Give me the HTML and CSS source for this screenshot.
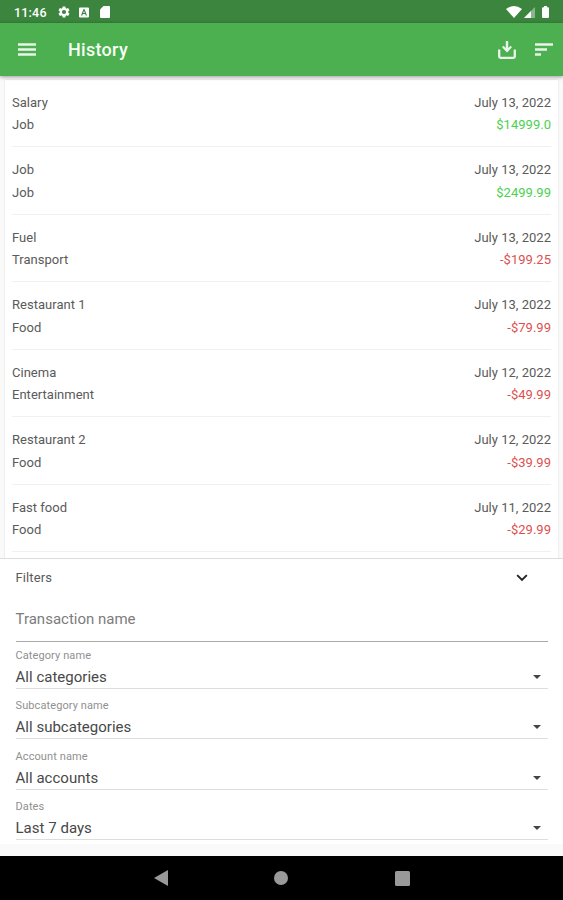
FILE: index.html
```html
<!DOCTYPE html>
<html lang="en">
<head>
<meta charset="utf-8">
<title>History</title>
<link rel="stylesheet" href="styles.css">
</head>
<body>
<div class="screen">
  <div class="status">
    <span class="clock">11:46</span>
    <svg class="gear" width="14" height="14" viewBox="0 0 24 24"><path d="M19.14 12.94c.04-.3.06-.61.06-.94s-.02-.64-.07-.94l2.03-1.58c.18-.14.23-.41.12-.61l-1.92-3.32c-.12-.22-.37-.29-.59-.22l-2.39.96c-.5-.38-1.03-.7-1.62-.94L14.4 2.81c-.04-.24-.24-.41-.48-.41h-3.84c-.24 0-.43.17-.47.41l-.36 2.54c-.59.24-1.13.57-1.62.94l-2.39-.96c-.22-.08-.47 0-.59.22L2.74 8.87c-.12.21-.08.47.12.61l2.03 1.58c-.05.3-.09.63-.09.94s.02.64.07.94l-2.03 1.58c-.18.14-.23.41-.12.61l1.92 3.32c.12.22.37.29.59.22l2.39-.96c.5.38 1.03.7 1.62.94l.36 2.54c.05.24.24.41.48.41h3.84c.24 0 .44-.17.47-.41l.36-2.54c.59-.24 1.13-.56 1.62-.94l2.39.96c.22.08.47 0 .59-.22l1.92-3.32c.12-.22.07-.47-.12-.61zM12 15.6a3.6 3.6 0 1 1 0-7.2 3.6 3.6 0 0 1 0 7.2z"/></svg>
    <svg class="debug" width="10" height="11" viewBox="0 0 10 11"><path fill-rule="evenodd" d="M1 0.500h8a1 1 0 0 1 1 1v8a1 1 0 0 1-1 1H1a1 1 0 0 1-1-1v-8a1 1 0 0 1 1-1zM4.400 2.200 2 8.600h1.300l.6-1.600h2.300l.6 1.600H8L5.600 2.200zM5 3.700l.8 2.300H4.200z"/></svg>
    <svg class="sd" width="10" height="12" viewBox="0 0 10 12"><path d="M3.500 0H9a1 1 0 0 1 1 1v10a1 1 0 0 1-1 1H1a1 1 0 0 1-1-1V3.500z"/></svg>
    <svg class="wifi" width="16" height="12" viewBox="0 0 16 12"><path d="M0 3Q8-3 16 3L8 12z"/></svg>
    <svg class="signal" width="11" height="11" viewBox="0 0 11 11"><path opacity=".4" d="M0 11 11 0v11z"/><path d="M0 11 7 4v7z"/></svg>
    <svg class="battery" width="7" height="12" viewBox="0 0 7 12"><path d="M2 0h3v1.200h1a1 1 0 0 1 1 1V11a1 1 0 0 1-1 1H1a1 1 0 0 1-1-1V2.200a1 1 0 0 1 1-1h1z"/></svg>
  </div>
  <header class="appbar">
    <svg class="menu" width="18" height="13" viewBox="0 0 18 13"><path d="M0 .3h18v2.400H0zM0 5.300h18v2.400H0zM0 10.300h18v2.400H0z"/></svg>
    <h1 class="title">History</h1>
    <svg class="download" width="18" height="18" viewBox="0 0 18 18"><path d="M7.800 0h2.400v7l2.300-2.200L14 6.300l-5 5.200-5-5.200 1.500-1.500L7.800 7z"/><path d="M1.200 8.500v7q0 1.300 1.300 1.300h13q1.300 0 1.300-1.300v-7" fill="none" stroke="#e8f5e9" stroke-width="2.300"/></svg>
    <svg class="sort" width="18" height="13" viewBox="0 0 18 13"><path d="M0 .3h18v2.400H0zM0 5.300h12v2.400H0zM0 10.300h6v2.400H0z"/></svg>
  </header>
  <main class="list-area">
    <div class="card">
      <div class="row"><div class="line"><span>Salary</span><span>July 13, 2022</span></div><div class="line"><span>Job</span><span class="income">$14999.0</span></div></div>
      <div class="row"><div class="line"><span>Job</span><span>July 13, 2022</span></div><div class="line"><span>Job</span><span class="income">$2499.99</span></div></div>
      <div class="row"><div class="line"><span>Fuel</span><span>July 13, 2022</span></div><div class="line"><span>Transport</span><span class="expense">-$199.25</span></div></div>
      <div class="row"><div class="line"><span>Restaurant 1</span><span>July 13, 2022</span></div><div class="line"><span>Food</span><span class="expense">-$79.99</span></div></div>
      <div class="row"><div class="line"><span>Cinema</span><span>July 12, 2022</span></div><div class="line"><span>Entertainment</span><span class="expense">-$49.99</span></div></div>
      <div class="row"><div class="line"><span>Restaurant 2</span><span>July 12, 2022</span></div><div class="line"><span>Food</span><span class="expense">-$39.99</span></div></div>
      <div class="row"><div class="line"><span>Fast food</span><span>July 11, 2022</span></div><div class="line"><span>Food</span><span class="expense">-$29.99</span></div></div>
    </div>
  </main>
  <section class="filters">
    <div class="filters-head"><span>Filters</span><svg width="12" height="8" viewBox="0 0 12 8"><path d="M1.200 1.200 6 6l4.800-4.800" fill="none" stroke="#222" stroke-width="1.900"/></svg></div>
    <div class="search">Transaction name</div>
    <div class="field"><div class="label">Category name</div><div class="value"><span>All categories</span><svg width="8" height="4" viewBox="0 0 8 4"><path d="M0 0h8L4 4z"/></svg></div></div>
    <div class="field"><div class="label">Subcategory name</div><div class="value"><span>All subcategories</span><svg width="8" height="4" viewBox="0 0 8 4"><path d="M0 0h8L4 4z"/></svg></div></div>
    <div class="field"><div class="label">Account name</div><div class="value"><span>All accounts</span><svg width="8" height="4" viewBox="0 0 8 4"><path d="M0 0h8L4 4z"/></svg></div></div>
    <div class="field"><div class="label">Dates</div><div class="value"><span>Last 7 days</span><svg width="8" height="4" viewBox="0 0 8 4"><path d="M0 0h8L4 4z"/></svg></div></div>
  </section>
  <nav class="navbar">
    <svg width="14" height="16" viewBox="0 0 14 16"><path d="M14 0v16L0 8z"/></svg>
    <svg width="14" height="14" viewBox="0 0 14 14"><circle cx="7" cy="7" r="7"/></svg>
    <svg width="15" height="15" viewBox="0 0 15 15"><rect width="15" height="15" rx="1.500"/></svg>
  </nav>
</div>
</body>
</html>
```
FILE: styles.css
```css
* { box-sizing: border-box; }
body { margin: 0; font-family: Roboto, sans-serif; color: #5a5a5a; background: #fafafa; }
svg { display: block; flex: none; }
.screen { width: 563px; height: 900px; display: flex; flex-direction: column; overflow: hidden; }
.status { height: 23px; flex: none; display: flex; align-items: center; padding: 1px 14px 0 14px; background: #3b853e; color: #fff; fill: #fff; }
.clock { width: 33px; font-size: 12.5px; font-weight: 500; letter-spacing: .2px; white-space: nowrap; }
.gear { margin-left: 10px; }
.debug { margin-left: 8px; }
.sd { margin-left: 11px; }
.wifi { margin-left: auto; }
.signal { margin-left: 2px; }
.battery { margin-left: 7px; }
.appbar { height: 52.500px; flex: none; display: flex; align-items: center; padding: 1px 10px 0 18px; background: #4caf50; fill: #e8f5e9; position: relative; box-shadow: 0 1px 4px rgba(0, 0, 0, .4); }
.title { margin: 0 auto 0 32px; font-size: 18px; line-height: 24px; font-weight: 500; letter-spacing: .3px; color: #f5fff5; }
.download { margin-right: 19px; }
.list-area { height: 482.500px; flex: none; padding: 4.200px 5px 0; background: #fafafa; overflow: hidden; }
.card { height: 490px; padding: 0 7px; background: #fff; box-shadow: 0 0 2px rgba(0, 0, 0, .12); }
.row { height: 67.500px; padding-top: 11.900px; border-bottom: 1px solid #f0f0f0; }
.line { display: flex; justify-content: space-between; font-size: 13px; line-height: 22.500px; letter-spacing: .02px; }
.income { color: #4bd150; }
.expense { color: #dc5050; }
.filters { height: 286px; flex: none; padding: 0 15px 0 15.500px; background: #fff; border-top: 1px solid #ddd; }
.filters-head { height: 38px; padding-bottom: 1px; display: flex; align-items: center; justify-content: space-between; padding-right: 20px; font-size: 13px; letter-spacing: .1px; }
.search { height: 44.500px; border-bottom: 1px solid #aaa; font-size: 15px; line-height: 44px; color: #7c7c7c; }
.field { height: 50.600px; padding-top: 7px; }
.label { font-size: 11px; line-height: 14px; letter-spacing: .1px; color: #909090; }
.value { height: 26px; padding-top: 3px; display: flex; align-items: center; justify-content: space-between; padding-right: 7px; border-bottom: 1px solid #ddd; font-size: 15px; letter-spacing: .02px; color: #484848; fill: #444; }
.navbar { height: 44px; flex: none; margin-top: auto; display: flex; align-items: center; justify-content: center; gap: 106.500px; background: #000; fill: #999; }
```
